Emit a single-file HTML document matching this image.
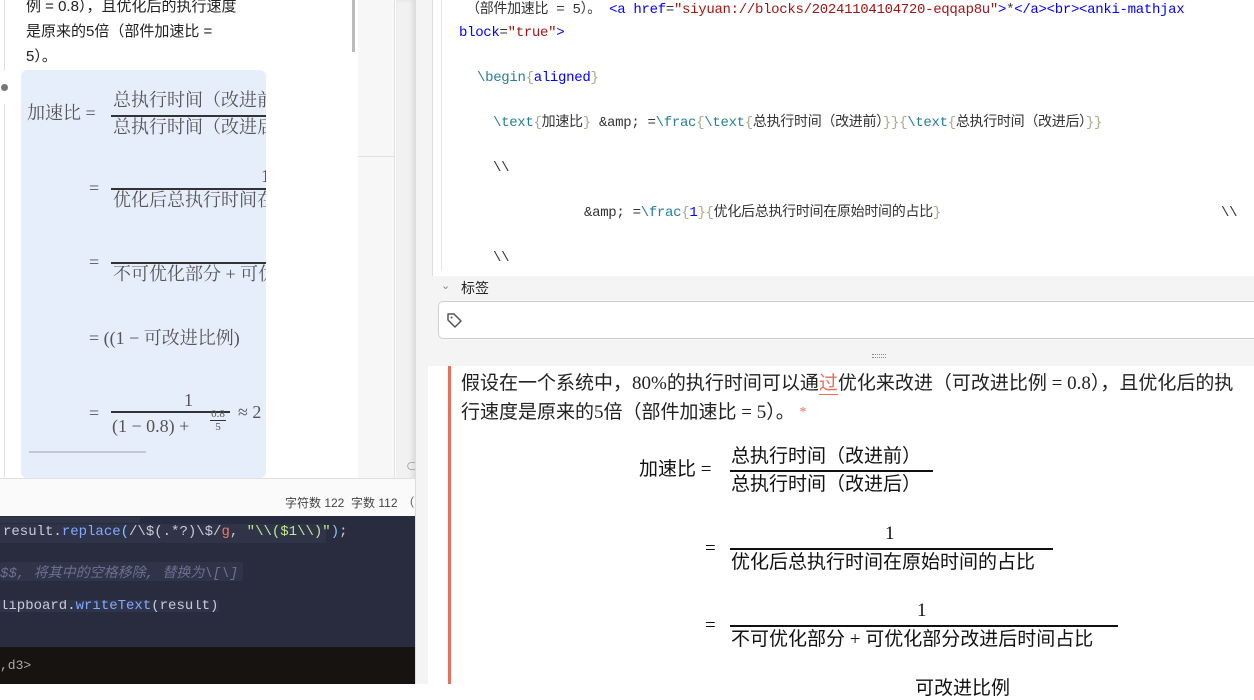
<!DOCTYPE html>
<html><head><meta charset="utf-8"><style>
*{margin:0;padding:0;box-sizing:border-box}
body{width:1254px;height:684px;overflow:hidden;background:#fff;position:relative;font-family:"Liberation Sans","Noto Sans CJK SC",sans-serif}
.a{position:absolute;white-space:nowrap}
.lm{font-family:"Liberation Serif","Noto Serif CJK SC",serif;color:#555;font-size:18px;line-height:20px}
.rm{font-family:"Liberation Serif","Noto Sans CJK SC",serif;color:#111;font-size:19px;line-height:22px}
.code{font-family:"Liberation Mono","Noto Sans CJK SC",monospace;font-size:14px;letter-spacing:-0.3px;color:#333;line-height:18px}
.k{color:#267f99}.s{color:#a31515}.b{color:#00f}.g{color:#008000}.y{color:#aa8}
.dk{font-family:"Liberation Mono","Noto Sans CJK SC",monospace;font-size:14px;color:#c8ccd8}
</style></head><body>
<div class="a" style="left:0;top:0;width:358px;height:478px;background:#fff"></div>
<div class="a" style="left:4px;top:0;width:1px;height:70px;background:#ddd"></div>
<div class="a" style="left:4px;top:104px;width:1px;height:373px;background:#ddd"></div>
<div class="a" style="left:1px;top:84px;width:7px;height:7px;border-radius:50%;background:#777"></div>
<div class="a" style="left:26px;top:-6px;font-size:15px;line-height:25px;color:#222">例 = 0.8），且优化后的执行速度<br>是原来的5倍（部件加速比 =<br>5）。</div>
<div class="a" style="left:352px;top:0;width:3px;height:52px;background:#bbb"></div>
<div class="a" style="left:358px;top:0;width:37px;height:478px;background:#f7f7f7;border-right:1px solid #e2e2e2"></div>
<div class="a" style="left:358px;top:156px;width:37px;height:1px;background:#e2e2e2"></div>
<div class="a" style="left:396px;top:0;width:19px;height:516px;background:#f1f1f1;box-shadow:inset -3px 0 4px rgba(0,0,0,.08)"></div>
<div class="a" style="left:406px;top:458px;font-size:11px;color:#999">⊂</div>
<div class="a" style="left:21px;top:70px;width:245px;height:408px;background:#e6edfb;border-radius:6px;overflow:hidden">
 <div class="a lm" style="left:6px;top:33px">加速比 =</div>
 <div class="a lm" style="left:92px;top:20px">总执行时间（改进前）</div>
 <div class="a" style="left:90px;top:45px;width:200px;height:1.5px;background:#333"></div>
 <div class="a lm" style="left:92px;top:47px">总执行时间（改进后）</div>
 <div class="a lm" style="left:68px;top:108px">=</div>
 <div class="a lm" style="left:240px;top:96px">1</div>
 <div class="a" style="left:90px;top:118px;width:200px;height:1.5px;background:#333"></div>
 <div class="a lm" style="left:92px;top:120px">优化后总执行时间在原始</div>
 <div class="a lm" style="left:68px;top:182px">=</div>
 <div class="a" style="left:90px;top:192px;width:200px;height:1.5px;background:#333"></div>
 <div class="a lm" style="left:92px;top:194px">不可优化部分 + 可优化</div>
 <div class="a lm" style="left:68px;top:258px">= ((1 − 可改进比例)</div>
 <div class="a lm" style="left:163px;top:320px">1</div>
 <div class="a lm" style="left:68px;top:333px">=</div>
 <div class="a" style="left:90px;top:341px;width:119px;height:1.5px;background:#333"></div>
 <div class="a lm" style="left:91px;top:346px">(1 − 0.8) +</div>
 <div class="a lm" style="left:189px;top:338px;font-size:11px;line-height:12px;text-align:center">0.8<br><span style="border-top:1px solid #333;display:inline-block;width:16px">5</span></div>
 <div class="a lm" style="left:217px;top:332px">≈ 2</div>
 <div class="a" style="left:8px;top:381px;width:117px;height:2px;background:#c2c7d2"></div>
</div>
<div class="a" style="left:0;top:478px;width:415px;height:38px;background:#fafafa;border-top:1px solid #e0e0e0"></div>
<div class="a" style="left:285px;top:494px;font-size:12px;color:#444">字符数 122&nbsp;&nbsp;字数 112</div>
<div class="a" style="left:410px;top:494px;font-size:12px;color:#666">(</div>
<div class="a" style="left:0;top:516px;width:415px;height:131px;background:#282c3e"></div>
<div class="a" style="left:0;top:517px;width:140px;height:6px;background:#303548"></div>
<div class="a" style="left:0;top:524px;width:326px;height:19px;background:#2f3449;border-radius:2px"></div>
<div class="a dk" style="left:3px;top:524px">result.<span style="color:#82aaff">replace</span><span style="color:#7fc8ff">(</span>/\$(.*?)\$/<span style="color:#f07860">g</span>, <span style="color:#c3e88d">"\\($1\\)"</span><span style="color:#7fc8ff">)</span>;</div>
<div class="a" style="left:0;top:562px;width:243px;height:19px;background:#2f3449;border-radius:2px"></div>
<div class="a dk" style="left:0;top:562px;color:#6b7190;font-style:italic">$$, 将其中的空格移除, 替换为\[\]</div>
<div class="a" style="left:0;top:600px;width:219px;height:12px;background:#2f3449;overflow:hidden"><div class="a dk" style="left:0;top:-2px">lipboard.<span style="color:#82aaff">writeText</span>(result);</div></div>
<div class="a" style="left:0;top:647px;width:415px;height:37px;background:#161311"></div>
<div class="a" style="left:0;top:658px;font-family:'Liberation Mono',monospace;font-size:13px;color:#aaa">,d3&gt;</div>
<div class="a" style="left:415px;top:0;width:839px;height:684px;background:#f4f4f4;border-left:1px solid #ddd"></div>
<div class="a" style="left:432px;top:0;width:822px;height:276px;background:#fff;border-left:1px solid #ddd"></div>
<div class="a" style="left:441px;top:0;width:1px;height:270px;background:#e6e6e6"></div>
<div class="a code" style="left:466px;top:1px"><span style="color:#333">（部件加速比 = 5）。</span> <span class="b">&lt;a href</span>=<span class="s">"siyuan://blocks/20241104104720-eqqap8u"</span><span class="b">&gt;</span>*<span class="b">&lt;/a&gt;&lt;br&gt;&lt;anki-mathjax</span></div>
<div class="a code" style="left:459px;top:24px"><span class="b">block</span>=<span class="s">"true"</span><span class="b">&gt;</span></div>
<div class="a code" style="left:477px;top:69px"><span class="k">\begin</span><span class="y">{</span><span class="b">aligned</span><span class="y">}</span></div>
<div class="a code" style="left:493px;top:114px"><span class="k">\text</span><span class="y">{</span>加速比<span class="y">}</span> &amp;amp; =<span class="k">\frac</span><span class="y">{</span><span class="k">\text</span><span class="y">{</span>总执行时间（改进前）<span class="y">}}{</span><span class="k">\text</span><span class="y">{</span>总执行时间（改进后）<span class="y">}}</span></div>
<div class="a code" style="left:493px;top:159px">\\</div>
<div class="a code" style="left:584px;top:204px">&amp;amp; =<span class="k">\frac</span><span class="y">{</span><span class="b">1</span><span class="y">}{</span>优化后总执行时间在原始时间的占比<span class="y">}</span></div>
<div class="a code" style="left:1221px;top:204px">\\</div>
<div class="a code" style="left:493px;top:249px">\\</div>
<div class="a" style="left:441px;top:279px;font-size:11px;color:#888">⌄</div>
<div class="a" style="left:461px;top:278px;font-size:14px;color:#222">标签</div>
<div class="a" style="left:438px;top:301px;width:830px;height:38px;background:#fff;border:1px solid #d0d0d0;border-radius:5px"></div>
<svg class="a" style="left:446px;top:311px" width="18" height="18" viewBox="0 0 18 18"><path d="M2 3 L2 9 L9 16 L15 10 L8 3 Z" fill="none" stroke="#555" stroke-width="1.5" stroke-linejoin="round"/><circle cx="5.5" cy="6.5" r="1" fill="#555"/></svg>
<div class="a" style="left:872px;top:354px;width:14px;height:4px;border-top:1px dotted #888;border-bottom:1px dotted #888"></div>
<div class="a" style="left:428px;top:366px;width:826px;height:318px;background:#fff"></div>
<div class="a" style="left:448px;top:366px;width:3px;height:318px;background:#e8705a"></div>
<div class="a" style="left:461px;top:369px;font-size:19px;line-height:29px;color:#222;font-family:'Liberation Serif','Noto Sans CJK SC',serif">假设在一个系统中，80%的执行时间可以通<span style="border-bottom:1.5px solid #e8705a;color:#e8705a">过</span>优化来改进（可改进比例 = 0.8），且优化后的执<br>行速度是原来的5倍（部件加速比 = 5）。 <span style="color:#e8705a;font-size:14px;vertical-align:top">*</span></div>
<div class="a rm" style="left:639px;top:459px">加速比 =</div>
<div class="a rm" style="left:731px;top:446px">总执行时间（改进前）</div>
<div class="a" style="left:730px;top:470px;width:203px;height:1.5px;background:#111"></div>
<div class="a rm" style="left:731px;top:474px">总执行时间（改进后）</div>
<div class="a rm" style="left:705px;top:538px">=</div>
<div class="a rm" style="left:885px;top:523px">1</div>
<div class="a" style="left:730px;top:548px;width:323px;height:1.5px;background:#111"></div>
<div class="a rm" style="left:731px;top:552px">优化后总执行时间在原始时间的占比</div>
<div class="a rm" style="left:705px;top:615px">=</div>
<div class="a rm" style="left:917px;top:600px">1</div>
<div class="a" style="left:730px;top:625px;width:388px;height:1.5px;background:#111"></div>
<div class="a rm" style="left:731px;top:629px">不可优化部分 + 可优化部分改进后时间占比</div>
<div class="a rm" style="left:915px;top:678px">可改进比例</div>
</body></html>
